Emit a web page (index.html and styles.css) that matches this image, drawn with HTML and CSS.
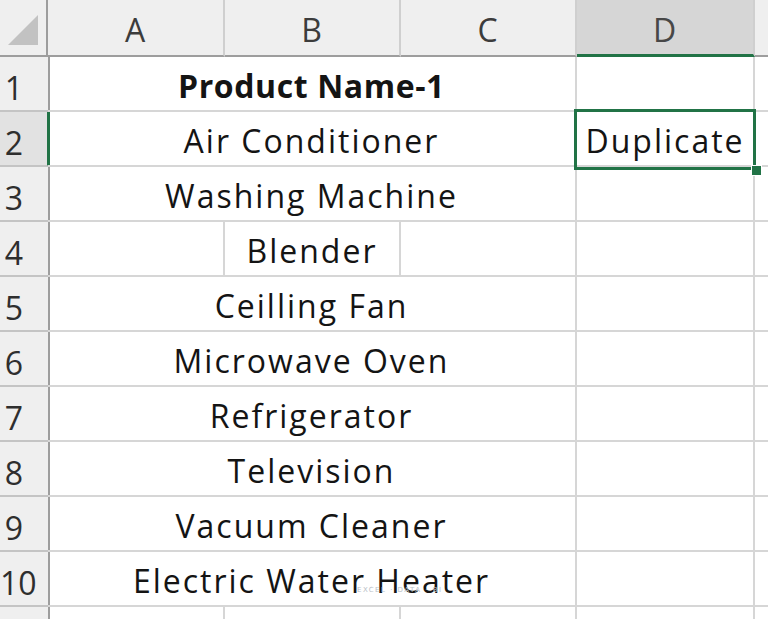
FILE: index.html
```html
<!DOCTYPE html>
<html>
<head>
<meta charset="utf-8">
<link rel="stylesheet" href="styles.css">
</head>
<body>
<div class="sheet">
  <div class="grid">
    <div class="corner"><span class="tri"></span></div>
    <div class="colh">A</div>
    <div class="colh">B</div>
    <div class="colh">C</div>
    <div class="colh sel">D</div>
    <div class="colh last"></div>

    <div class="rowh">1</div>
    <div class="cell span3 bold">Product Name-1</div>
    <div class="cell"></div>
    <div class="cell last"></div>

    <div class="rowh rsel">2</div>
    <div class="cell span3">Air Conditioner</div>
    <div class="cell">Duplicate</div>
    <div class="cell last"></div>

    <div class="rowh">3</div>
    <div class="cell span3">Washing Machine</div>
    <div class="cell"></div>
    <div class="cell last"></div>

    <div class="rowh">4</div>
    <div class="cell"></div>
    <div class="cell">Blender</div>
    <div class="cell"></div>
    <div class="cell"></div>
    <div class="cell last"></div>

    <div class="rowh">5</div>
    <div class="cell span3">Ceilling Fan</div>
    <div class="cell"></div>
    <div class="cell last"></div>

    <div class="rowh">6</div>
    <div class="cell span3">Microwave Oven</div>
    <div class="cell"></div>
    <div class="cell last"></div>

    <div class="rowh">7</div>
    <div class="cell span3">Refrigerator</div>
    <div class="cell"></div>
    <div class="cell last"></div>

    <div class="rowh">8</div>
    <div class="cell span3">Television</div>
    <div class="cell"></div>
    <div class="cell last"></div>

    <div class="rowh">9</div>
    <div class="cell span3">Vacuum Cleaner</div>
    <div class="cell"></div>
    <div class="cell last"></div>

    <div class="rowh">10</div>
    <div class="cell span3">Electric Water Heater</div>
    <div class="cell"></div>
    <div class="cell last"></div>

    <div class="rowh"></div>
    <div class="cell"></div>
    <div class="cell"></div>
    <div class="cell"></div>
    <div class="cell"></div>
    <div class="cell last"></div>
  </div>
  <div class="selbox"><span class="handle"></span></div>
  <div class="wm">EXCEL · DATA · BI</div>
</div>
</body>
</html>
```

FILE: styles.css
```css
html, body {
  margin: 0;
  padding: 0;
  background: #ffffff;
  overflow: hidden;
}

.sheet {
  position: relative;
  width: 768px;
  height: 619px;
  overflow: hidden;
  font-family: "Open Sans", "Noto Sans", sans-serif;
}

.grid {
  display: grid;
  grid-template-columns: 48px 177px 176px 176px 178px 60px;
  grid-template-rows: 57px repeat(11, 55px);
}

.grid > div {
  box-sizing: border-box;
}

.corner {
  position: relative;
  background: #efefef;
  border-right: 2px solid #9d9d9d;
  border-bottom: 2px solid #9d9d9d;
}

.tri {
  position: absolute;
  right: 8px;
  bottom: 10px;
  width: 0;
  height: 0;
  border-left: 30px solid transparent;
  border-bottom: 30px solid #c2c2c2;
}

.colh {
  background: #efefef;
  border-right: 2px solid #cfcfcf;
  border-bottom: 2px solid #9d9d9d;
  text-align: center;
  font-size: 32px;
  line-height: 59px;
  color: #3c3c3c;
  letter-spacing: 1px;
}

.colh.sel {
  background: #d6d6d6;
  border-bottom: 3px solid #217346;
  color: #474747;
}

.rowh {
  background: #efefef;
  border-right: 2px solid #9d9d9d;
  border-bottom: 2px solid #c4c4c4;
  font-size: 32px;
  line-height: 61px;
  color: #2e2e2e;
  text-align: center;
  width: 28px;
  overflow: visible;
  white-space: nowrap;
  padding-right: 20px;
  box-sizing: content-box !important;
  height: 53px;
}

.rowh.rsel {
  background: #e2e2e2;
  border-right: 3px solid #217346;
  padding-right: 19px;
}

.cell {
  border-right: 2px solid #d6d6d6;
  border-bottom: 2px solid #d6d6d6;
  text-align: center;
  font-size: 32px;
  font-weight: 500;
  line-height: 57px;
  letter-spacing: 2px;
  color: #141414;
  white-space: nowrap;
  overflow: visible;
}

.cell.span3 {
  grid-column: span 3;
}

.cell.bold {
  font-weight: 700;
  letter-spacing: 0.6px;
}

.cell.last,
.colh.last {
  border-right: none;
}

.selbox {
  position: absolute;
  left: 574px;
  top: 109px;
  width: 176px;
  height: 55px;
  border: 3px solid #217346;
}

.handle {
  position: absolute;
  right: -9px;
  bottom: -9px;
  width: 9px;
  height: 9px;
  background: #217346;
  border: 1px solid #ffffff;
}

.wm {
  position: absolute;
  left: 357px;
  top: 586px;
  font-size: 7px;
  letter-spacing: 1.5px;
  color: #b9c1c8;
  font-family: "DejaVu Sans", sans-serif;
}
```
